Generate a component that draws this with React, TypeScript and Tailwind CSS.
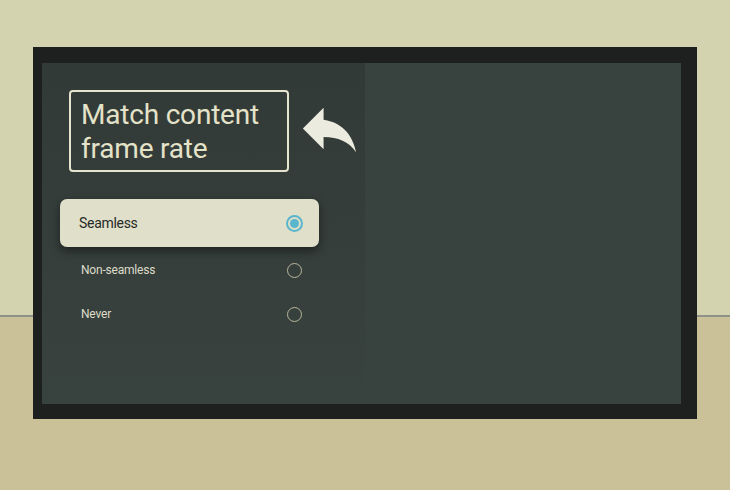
import React from "react";

const options = ["Seamless", "Non-seamless", "Never"];

function ReplyArrow() {
  return (
    <svg width="71" height="71" viewBox="0 0 24 24" className="mt-[3px] ml-[5px] shrink-0">
      <path
        d="M10 9V5l-7 7 7 7v-4.1c5 0 8.5 1.6 11 5.1-1-5-4-10-11-11z"
        fill="#ecebdf"
      />
    </svg>
  );
}

function Radio({ checked }: { checked: boolean }) {
  if (checked) {
    return (
      <span className="flex h-[17px] w-[17px] items-center justify-center rounded-full border-2 border-[#5ab6cc]">
        <span className="h-[9px] w-[9px] rounded-full bg-[#5ab6cc]" />
      </span>
    );
  }
  return <span className="h-[15px] w-[15px] rounded-full border-[1.5px] border-[#bab69d]" />;
}

export default function App() {
  const selected = 0;

  return (
    <div
      className="h-[490px] w-[730px] overflow-hidden bg-[linear-gradient(to_bottom,#d4d3b0_315px,#8e928b_315px,#8e928b_317px,#cac198_317px)] pt-[47px] pl-[33px]"
      style={{ fontFamily: "Roboto, 'Liberation Sans', sans-serif" }}
    >
      {/* tv bezel */}
      <div className="flex h-[372px] w-[664px] bg-[#1e201f] pt-[16px] pr-[16px] pb-[15px] pl-[9px]">
        {/* settings panel */}
        <div className="flex w-[323px] flex-col bg-[linear-gradient(to_bottom,#323a37,#38423e)] pt-[27px]">
          <div className="flex items-start pl-[27px]">
            <div className="h-[82px] w-[220px] rounded-[4px] border-2 border-[#e6e4cf] pt-[6px] pl-[10px] text-[28px] leading-[34px] tracking-[-0.2px] text-[#e4e2c8]">
              Match content
              <br />
              frame rate
            </div>
            <ReplyArrow />
          </div>

          <div className="mt-[27px] flex flex-col pl-[18px] pr-[46px]">
            {options.map((label, i) =>
              i === selected ? (
                <div
                  key={label}
                  className="mb-px flex h-[48px] items-center justify-between rounded-[7px] bg-[#e0dfca] pl-[19px] pr-[16px] shadow-[0_4px_10px_rgba(0,0,0,0.45)]"
                >
                  <span className="text-[14px] tracking-[-0.3px] text-[#262a27]">{label}</span>
                  <Radio checked />
                </div>
              ) : (
                <div key={label} className="flex h-[44px] items-center justify-between pl-[21px] pr-[17px]">
                  <span className="text-[12px] tracking-[-0.2px] text-[#dedcc9]">{label}</span>
                  <Radio checked={false} />
                </div>
              )
            )}
          </div>
        </div>

        {/* preview area */}
        <div className="flex-1 bg-[#38433f]" />
      </div>
    </div>
  );
}
